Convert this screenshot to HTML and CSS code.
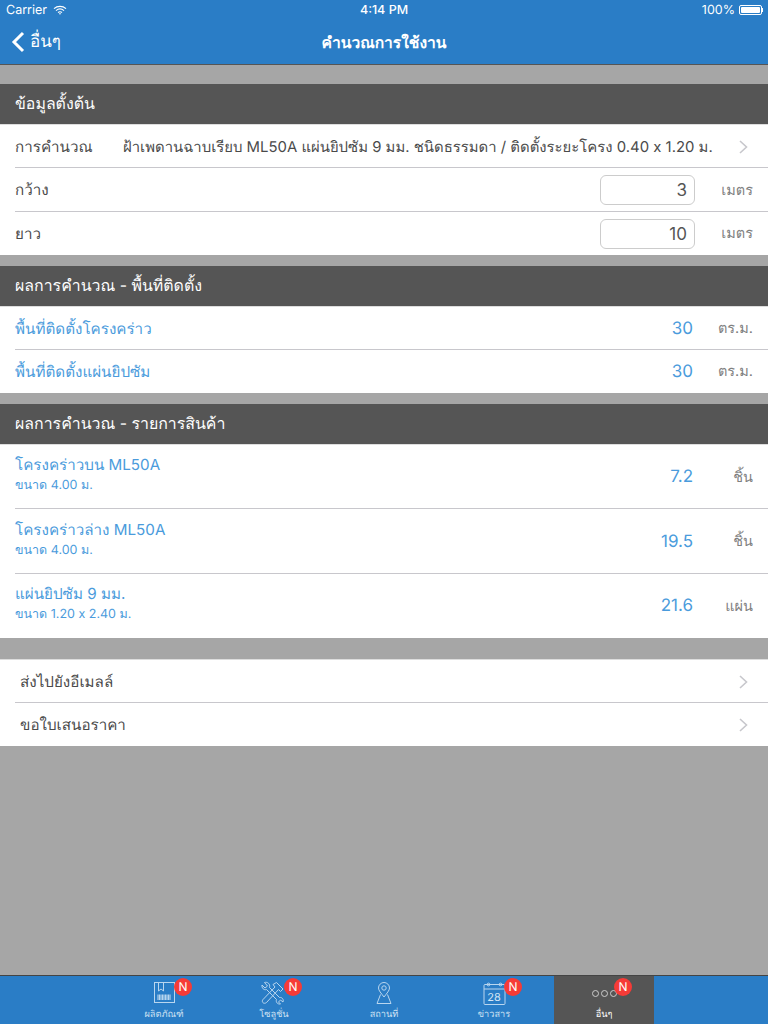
FILE: index.html
```html
<!DOCTYPE html>
<html lang="th">
<head>
    <meta charset="UTF-8">
    <meta name="viewport" content="width=device-width, initial-scale=1.0">
    <title>คำนวณการใช้งาน</title>
    <link rel="stylesheet" href="styles.css">
</head>
<body>
    <div class="app">
        <header class="topbar">
            <div class="status">
                <div class="status-left">
                    <span>Carrier</span>
                    <svg class="wifi" width="14" height="10" viewBox="0 0 14 10" fill="none" stroke="#fff" stroke-width="1.2">
                        <path d="M1 3.6C4.4 .6 9.6 .6 13 3.6"/>
                        <path d="M3 5.6C5.3 3.7 8.7 3.7 11 5.6"/>
                        <path d="M5 7.5C6.2 6.6 7.8 6.6 9 7.5"/>
                        <path d="M7 9.8L5.9 8.6C6.6 8.2 7.4 8.2 8.1 8.6Z" fill="#fff" stroke="none"/>
                    </svg>
                </div>
                <div class="status-time">4:14 PM</div>
                <div class="status-right">
                    <span>100%</span>
                    <span class="battery"><span class="battery-fill"></span></span>
                    <span class="battery-tip"></span>
                </div>
            </div>
            <nav class="navbar">
                <div class="back">
                    <svg width="14" height="22" viewBox="0 0 14 22" fill="none" stroke="#fff" stroke-width="3">
                        <path d="M12 2L3 11L12 20"/>
                    </svg>
                    <span>อื่นๆ</span>
                </div>
                <div class="nav-title">คำนวณการใช้งาน</div>
            </nav>
        </header>

        <main class="content">
            <h2 class="section-head first">ข้อมูลตั้งต้น</h2>
            <section class="group">
                <div class="row">
                    <span class="label calc-label">การคำนวณ</span>
                    <span class="calc-value">ฝ้าเพดานฉาบเรียบ ML50A แผ่นยิปซัม 9 มม. ชนิดธรรมดา / ติดตั้งระยะโครง 0.40 x 1.20 ม.</span>
                    <svg class="chevron" width="9" height="14" viewBox="0 0 9 14" fill="none" stroke="#c7c7cc" stroke-width="1.6"><path d="M1 1L7.5 7L1 13"/></svg>
                </div>
                <div class="row">
                    <span class="label">กว้าง</span>
                    <input class="num-input" type="text" value="3">
                    <span class="unit">เมตร</span>
                </div>
                <div class="row">
                    <span class="label">ยาว</span>
                    <input class="num-input" type="text" value="10">
                    <span class="unit">เมตร</span>
                </div>
            </section>

            <h2 class="section-head">ผลการคำนวณ - พื้นที่ติดตั้ง</h2>
            <section class="group">
                <div class="row">
                    <span class="label blue">พื้นที่ติดตั้งโครงคร่าว</span>
                    <span class="amount">30</span>
                    <span class="unit">ตร.ม.</span>
                </div>
                <div class="row">
                    <span class="label blue">พื้นที่ติดตั้งแผ่นยิปซัม</span>
                    <span class="amount">30</span>
                    <span class="unit">ตร.ม.</span>
                </div>
            </section>

            <h2 class="section-head">ผลการคำนวณ - รายการสินค้า</h2>
            <section class="group">
                <div class="row tall">
                    <div class="item">
                        <span class="label blue">โครงคร่าวบน ML50A</span>
                        <span class="size">ขนาด 4.00 ม.</span>
                    </div>
                    <span class="amount">7.2</span>
                    <span class="unit">ชิ้น</span>
                </div>
                <div class="row tall">
                    <div class="item">
                        <span class="label blue">โครงคร่าวล่าง ML50A</span>
                        <span class="size">ขนาด 4.00 ม.</span>
                    </div>
                    <span class="amount">19.5</span>
                    <span class="unit">ชิ้น</span>
                </div>
                <div class="row tall">
                    <div class="item">
                        <span class="label blue">แผ่นยิปซัม 9 มม.</span>
                        <span class="size">ขนาด 1.20 x 2.40 ม.</span>
                    </div>
                    <span class="amount">21.6</span>
                    <span class="unit">แผ่น</span>
                </div>
            </section>

            <section class="group actions">
                <div class="row">
                    <span class="label">ส่งไปยังอีเมลล์</span>
                    <svg class="chevron" width="9" height="14" viewBox="0 0 9 14" fill="none" stroke="#c7c7cc" stroke-width="1.6"><path d="M1 1L7.5 7L1 13"/></svg>
                </div>
                <div class="row">
                    <span class="label">ขอใบเสนอราคา</span>
                    <svg class="chevron" width="9" height="14" viewBox="0 0 9 14" fill="none" stroke="#c7c7cc" stroke-width="1.6"><path d="M1 1L7.5 7L1 13"/></svg>
                </div>
            </section>
        </main>

        <footer class="tabbar">
            <div class="tab">
                <div class="tab-icon">
                    <svg width="24" height="24" viewBox="0 0 24 24" fill="none" stroke="#b9d6ef" stroke-width="1">
                        <rect x="2.5" y="1.5" width="20" height="20"/>
                        <path d="M6.5 1.5V10L9 8L11.5 10V1.5"/>
                        <path d="M6 13.5V19M7.5 13.5V19M9 13.5V19M10.5 13.5V19M12 13.5V19M13.5 13.5V19M15 13.5V19M16.5 13.5V19M18 13.5V19" stroke-width="1.1"/>
                    </svg>
                    <span class="badge">N</span>
                </div>
                <span class="tab-label">ผลิตภัณฑ์</span>
            </div>
            <div class="tab">
                <div class="tab-icon">
                    <svg width="26" height="24" viewBox="0 0 26 24" fill="none" stroke="#b9d6ef" stroke-width="1">
                        <path d="M1 4L4 7L6.5 5L3.5 1.5C6.5 .5 9.5 3 8.5 6.5L18.5 16.5C21 16 23 18.5 22 21L19.5 19L17.5 21L19.5 23C17 23.5 14.5 21.5 15.5 18.5L5.5 8.5C3 9.5 .5 7 1 4Z"/>
                        <path d="M12 3.5L15.5 1.5L22 8L19.5 10.5L17.5 8.5L5.5 21.5C4.5 22.5 2.5 22.5 1.8 21.5C1 20.5 1.2 19 2.5 18L14 6Z"/>
                    </svg>
                    <span class="badge">N</span>
                </div>
                <span class="tab-label">โซลูชั่น</span>
            </div>
            <div class="tab">
                <div class="tab-icon">
                    <svg width="24" height="24" viewBox="0 0 24 24" fill="none" stroke="#b9d6ef" stroke-width="1">
                        <path d="M12 16C9 12 6.5 9.5 6.5 7A5.5 5.5 0 0 1 17.5 7C17.5 9.5 15 12 12 16Z"/>
                        <circle cx="12" cy="7" r="2.2"/>
                        <path d="M8.5 13.5L5 22.5H19L15.5 13.5"/>
                    </svg>
                </div>
                <span class="tab-label">สถานที่</span>
            </div>
            <div class="tab">
                <div class="tab-icon">
                    <svg width="24" height="24" viewBox="0 0 24 24" fill="none" stroke="#b9d6ef" stroke-width="1">
                        <rect x="2" y="3.5" width="21" height="20" rx="1"/>
                        <path d="M2 8H23"/>
                        <circle cx="6.5" cy="3.5" r="1.4"/>
                        <circle cx="18.5" cy="3.5" r="1.4"/>
                    </svg>
                    <span class="cal-day">28</span>
                    <span class="badge">N</span>
                </div>
                <span class="tab-label">ข่าวสาร</span>
            </div>
            <div class="tab active">
                <div class="tab-icon">
                    <span class="dots"><i></i><i></i><i></i></span>
                    <span class="badge">N</span>
                </div>
                <span class="tab-label">อื่นๆ</span>
            </div>
        </footer>
    </div>
</body>
</html>
```

FILE: styles.css
```css
* {
    box-sizing: border-box;
}

body {
    margin: 0;
    font-family: "Inter", "Noto Sans", "Liberation Sans", sans-serif;
    color: #4a4a4a;
    text-rendering: geometricPrecision;
}

.app {
    width: 768px;
    height: 1024px;
    display: flex;
    flex-direction: column;
    background-color: #a6a6a6;
    overflow: hidden;
}

.topbar {
    height: 65px;
    background-color: #2a7dc6;
    border-bottom: 1px solid #555;
    color: #fff;
}

.status {
    height: 20px;
    padding: 0 5px 0 6px;
    display: flex;
    align-items: center;
    justify-content: space-between;
    font-size: 12.5px;
    position: relative;
}

.status-left {
    display: flex;
    align-items: center;
    gap: 6px;
}

.status-time {
    font-weight: 500;
    position: absolute;
    left: 0;
    right: 0;
    text-align: center;
}

.status-right {
    display: flex;
    align-items: center;
    gap: 4px;
}

.battery {
    width: 23px;
    height: 10px;
    border: 1px solid #fff;
    border-radius: 2px;
    padding: 1px;
    display: flex;
}

.battery-fill {
    flex: 1;
    background-color: #fff;
    border-radius: 1px;
}

.battery-tip {
    width: 1px;
    height: 4px;
    margin-left: -4px;
    background-color: #fff;
}

.navbar {
    height: 44px;
    display: flex;
    align-items: center;
    justify-content: center;
    position: relative;
}

.back {
    position: absolute;
    left: 11px;
    top: 11px;
    display: flex;
    align-items: center;
    gap: 5px;
    font-size: 17px;
    line-height: 22px;
}

.nav-title {
    font-size: 15.6px;
    font-weight: 700;
}

.content {
    flex: 1;
    padding-top: 19px;
}

.section-head {
    margin: 11px 0 0;
    height: 40px;
    padding: 0 15px;
    display: flex;
    align-items: center;
    background-color: #555;
    color: #fff;
    font-size: 15.9px;
    font-weight: 400;
}

.section-head.first {
    margin-top: 0;
}

.group {
    background-color: #fff;
    border-top: 1px solid #ddd;
}

.actions {
    margin-top: 21px;
}

.row {
    height: 44px;
    padding: 0 15px;
    display: flex;
    align-items: center;
    position: relative;
    font-size: 15.2px;
}

.row:first-child,
.row:last-child {
    height: 43px;
}

.row:not(:last-child)::after {
    content: "";
    position: absolute;
    bottom: 0;
    left: 15px;
    right: 0;
    height: 1px;
    background-color: #c8c7cc;
}

.row.tall {
    height: 65px;
}

.row.tall:first-child,
.row.tall:last-child {
    height: 64px;
}

.label {
    flex: 1;
    white-space: nowrap;
}

.actions .label {
    padding-left: 5px;
}

.calc-label {
    flex: 0 0 108px;
}

.calc-value {
    flex: 1;
    font-size: 14.9px;
    white-space: nowrap;
}

.blue {
    color: #4a9bdc;
}

.item {
    flex: 1;
    display: flex;
    flex-direction: column;
    margin-bottom: 3px;
}

.item .label {
    flex: none;
    line-height: 20px;
}

.size {
    margin-top: 1px;
    color: #4a9bdc;
    font-size: 12.5px;
    line-height: 20px;
}

.amount {
    color: #4a9bdc;
    font-size: 17px;
    width: 80px;
    text-align: right;
}

.unit {
    width: 60px;
    text-align: right;
    color: #808080;
    font-size: 14.5px;
}

.num-input {
    width: 95px;
    height: 30px;
    margin-left: auto;
    margin-right: -2px;
    padding: 0 7px;
    border: 1px solid #ccc;
    border-radius: 6px;
    text-align: right;
    font: inherit;
    font-size: 17px;
    color: #555;
}

.chevron {
    margin-left: auto;
    margin-right: 5px;
}

.tabbar {
    height: 49px;
    padding-left: 114px;
    background-color: #2a7dc6;
    border-top: 1px solid #444;
    display: flex;
}

.tab {
    width: 100px;
    margin-right: 10px;
    display: flex;
    flex-direction: column;
    align-items: center;
    color: #cfe2f3;
    font-size: 9.2px;
}

.tab.active {
    background-color: #555;
    color: #fff;
}

.tab-icon {
    width: 40px;
    height: 30px;
    padding-top: 5px;
    display: flex;
    justify-content: center;
    position: relative;
}

.tab-label {
    line-height: 18px;
    white-space: nowrap;
}

.badge {
    position: absolute;
    top: 2px;
    left: 30px;
    width: 18px;
    height: 18px;
    border-radius: 50%;
    background-color: #f63b37;
    color: #fff;
    font-size: 12px;
    line-height: 18px;
    text-align: center;
}

.cal-day {
    position: absolute;
    top: 14px;
    left: 0;
    right: 0;
    text-align: center;
    font-size: 11px;
    color: #d5e6f5;
}

.dots {
    display: flex;
    gap: 2px;
    margin-top: 9px;
}

.dots i {
    width: 7px;
    height: 7px;
    border: 1px solid #ccc;
    border-radius: 50%;
}
```
